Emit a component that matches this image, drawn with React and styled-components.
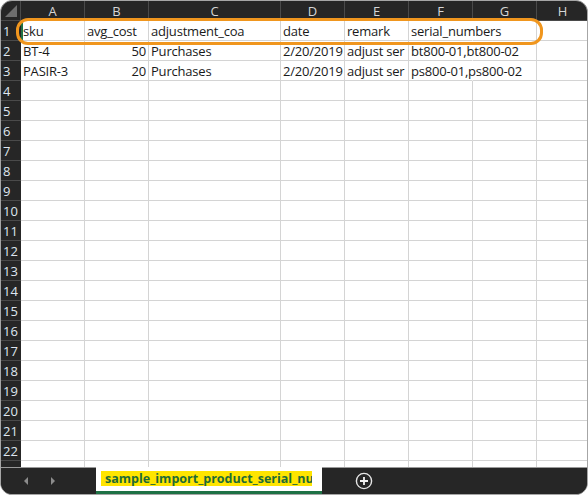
import React from "react";
import styled, { createGlobalStyle } from "styled-components";

const GlobalStyle = createGlobalStyle`
  html, body {
    margin: 0;
    padding: 0;
    background: #ffffff;
  }
  * {
    box-sizing: border-box;
  }
`;

const columns = [
  { key: "A", width: 64 },
  { key: "B", width: 64 },
  { key: "C", width: 132 },
  { key: "D", width: 64 },
  { key: "E", width: 64 },
  { key: "F", width: 64 },
  { key: "G", width: 64 },
  { key: "H", width: 52 },
];

const data = [
  ["sku", "avg_cost", "adjustment_coa", "date", "remark", "serial_numbers", "", ""],
  ["BT-4", "50", "Purchases", "2/20/2019", "adjust ser", "bt800-01,bt800-02", "", ""],
  ["PASIR-3", "20", "Purchases", "2/20/2019", "adjust ser", "ps800-01,ps800-02", "", ""],
];

const numericCols = ["B"];
const rowCount = 23;

const App = () => {
  const template = `20px ${columns.map((c) => c.width + "px").join(" ")}`;

  return (
    <>
      <GlobalStyle />
      <Window>
        <SheetArea>
          <Grid style={{ gridTemplateColumns: template }}>
            <Corner>
              <CornerTriangle />
            </Corner>
            {columns.map((c) => (
              <ColHeader key={c.key}>{c.key}</ColHeader>
            ))}
            {Array.from({ length: rowCount }).map((_, r) => (
              <React.Fragment key={r}>
                <RowHeader>{r + 1}</RowHeader>
                {columns.map((c, ci) => {
                  const row = data[r] || [];
                  const value = row[ci] || "";
                  const spill = value !== "" && ci < columns.length - 1 && !row[ci + 1];
                  return (
                    <Cell
                      key={c.key}
                      $numeric={numericCols.includes(c.key) && r > 0}
                      $active={r === 0 && ci === 0}
                      $spill={spill}
                    >
                      {value}
                    </Cell>
                  );
                })}
              </React.Fragment>
            ))}
          </Grid>
          <Highlight />
        </SheetArea>
        <TabBar>
          <NavButtons>
            <NavArrow viewBox="0 0 8 10">
              <path d="M6 1 L2 5 L6 9 Z" />
            </NavArrow>
            <NavArrow viewBox="0 0 8 10">
              <path d="M2 1 L6 5 L2 9 Z" />
            </NavArrow>
          </NavButtons>
          <SheetTab>
            <TabLabel>sample_import_product_serial_nu</TabLabel>
          </SheetTab>
          <AddSheet viewBox="0 0 18 18">
            <circle cx="9" cy="9" r="7.6" fill="none" stroke="#e6e6e6" strokeWidth="1.4" />
            <path d="M9 5 V13 M5 9 H13" stroke="#f2f2f2" strokeWidth="1.8" />
          </AddSheet>
        </TabBar>
      </Window>
    </>
  );
};

export default App;

const Window = styled.div`
  width: 588px;
  height: 495px;
  display: flex;
  flex-direction: column;
  background: #262626;
  border: 1px solid #a6a6a6;
  border-radius: 12px;
  overflow: hidden;
  font-family: "Open Sans", "Liberation Sans", sans-serif;
`;

const SheetArea = styled.div`
  position: relative;
  flex: 1;
  overflow: hidden;
`;

const Grid = styled.div`
  display: grid;
  grid-auto-rows: 20px;
  grid-template-rows: 20px;
  background: #ffffff;
`;

const Corner = styled.div`
  position: relative;
  background: #262626;
  border-right: 1px solid #4a4a4a;
  border-bottom: 1px solid #4a4a4a;
`;

const CornerTriangle = styled.div`
  position: absolute;
  right: 3px;
  bottom: 3px;
  width: 0;
  height: 0;
  border-left: 12px solid transparent;
  border-bottom: 12px solid #6e6e6e;
`;

const ColHeader = styled.div`
  display: flex;
  align-items: center;
  justify-content: center;
  background: #262626;
  color: #d6d6d6;
  font-size: 13px;
  border-right: 1px solid #4a4a4a;
  border-bottom: 1px solid #4a4a4a;
`;

const RowHeader = styled.div`
  display: flex;
  align-items: center;
  padding-left: 2px;
  background: #262626;
  color: #dfe6f0;
  font-size: 13px;
  border-bottom: 1px solid #4a4a4a;
`;

const Cell = styled.div`
  position: relative;
  z-index: ${(p) => (p.$spill ? 1 : 0)};
  display: flex;
  align-items: center;
  justify-content: ${(p) => (p.$numeric ? "flex-end" : "flex-start")};
  padding: 0 2px 0 2px;
  font-size: 13px;
  letter-spacing: -0.2px;
  color: #1a1a1a;
  white-space: nowrap;
  overflow: ${(p) => (p.$spill ? "visible" : "hidden")};
  border-right: 1px solid ${(p) => (p.$spill ? "#ffffff" : "#d4d4d4")};
  border-bottom: 1px solid #d4d4d4;
  box-shadow: ${(p) => (p.$active ? "inset 2px 0 0 #1e7145" : "none")};
`;

const Highlight = styled.div`
  position: absolute;
  z-index: 2;
  left: 15px;
  top: 17px;
  width: 527px;
  height: 27px;
  border: 3.5px solid #f0961e;
  border-radius: 12px;
  pointer-events: none;
`;

const TabBar = styled.div`
  height: 27px;
  flex-shrink: 0;
  display: flex;
  align-items: stretch;
  background: #262626;
  border-top: 1px solid #9a9a9a;
`;

const NavButtons = styled.div`
  width: 95px;
  display: flex;
  align-items: center;
  gap: 19px;
  padding-left: 21px;
`;

const NavArrow = styled.svg`
  width: 8px;
  height: 10px;
  fill: #8c8c8c;
`;

const SheetTab = styled.div`
  width: 226px;
  display: flex;
  align-items: flex-start;
  padding: 4px 0 0 5px;
  background: #ffffff;
  border-bottom: 3px solid #1e7145;
  margin-top: -1px;
`;

const TabLabel = styled.span`
  background: #ffe500;
  color: #1f6b36;
  font-family: "Open Sans", "Liberation Sans", sans-serif;
  font-weight: 700;
  font-size: 12.5px;
  line-height: 15px;
  padding: 0 4px;
  white-space: nowrap;
  overflow: hidden;
  width: 211px;
`;

const AddSheet = styled.svg`
  width: 18px;
  height: 18px;
  align-self: center;
  margin-left: 33px;
`;
